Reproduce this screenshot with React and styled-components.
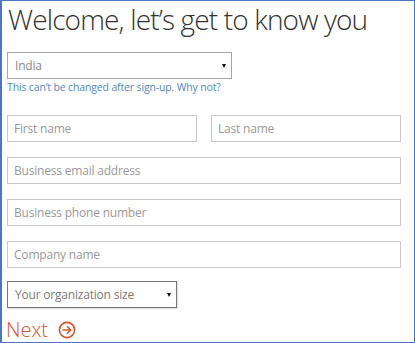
import styled, { createGlobalStyle } from "styled-components";

const GlobalStyle = createGlobalStyle`
  html, body {
    margin: 0;
    padding: 0;
    background: #ffffff;
  }
  body {
    font-family: "Open Sans", "Noto Sans", sans-serif;
  }
  * {
    box-sizing: border-box;
  }
`;

const Frame = styled.main`
  width: 415px;
  height: 343px;
  border: 1px solid #4a76c2;
  border-left-width: 2px;
  padding: 0 13px 0 5px;
  display: flex;
  flex-direction: column;
  overflow: hidden;
  background: #ffffff;
`;

const Title = styled.h1`
  margin: 0 0 0 1px;
  font-size: 28px;
  line-height: 36px;
  font-weight: 300;
  letter-spacing: -0.85px;
  color: #333333;
  white-space: nowrap;
`;

const Field = styled.div`
  margin-top: ${(p) => p.$top || 15}px;
  display: flex;
  gap: 14px;
`;

const SelectWrap = styled.div`
  position: relative;
  width: ${(p) => p.$width}px;
  height: 27px;
  &::after {
    content: "";
    position: absolute;
    right: 6px;
    top: 12px;
    border-left: 2.5px solid transparent;
    border-right: 2.5px solid transparent;
    border-top: 4px solid #111111;
    pointer-events: none;
  }
`;

const Select = styled.select`
  appearance: none;
  width: 100%;
  height: 100%;
  margin: 0;
  border: 1px solid ${(p) => (p.$dark ? "#777777" : "#a6a6a6")};
  box-shadow: ${(p) => (p.$dark ? "1px 1px 1px rgba(0,0,0,0.12)" : "none")};
  border-radius: 0;
  background: #ffffff;
  padding: 0 0 0 7px;
  font-family: inherit;
  font-size: 12px;
  letter-spacing: -0.2px;
  color: ${(p) => (p.$dark ? "#7a7a7a" : "#8a8a8a")};
  outline: none;
`;

const Input = styled.input`
  flex: 1;
  min-width: 0;
  height: 27px;
  margin: 0;
  border: 1px solid #c8c8c8;
  border-radius: 0;
  padding: 0 6px;
  font-family: inherit;
  font-size: 12px;
  letter-spacing: -0.2px;
  color: #333333;
  outline: none;
  &::placeholder {
    color: #999999;
  }
`;

const Hint = styled.a`
  margin-top: 1px;
  font-size: 10.5px;
  line-height: 14px;
  letter-spacing: -0.15px;
  color: #5187c4;
  text-decoration: none;
`;

const NextButton = styled.button`
  margin-top: 9px;
  margin-left: -1px;
  align-self: flex-start;
  display: flex;
  align-items: center;
  gap: 10px;
  border: 0;
  background: none;
  padding: 0;
  font-family: inherit;
  font-size: 20px;
  line-height: 26px;
  font-weight: 300;
  color: #d9532a;
  cursor: pointer;
`;

const ArrowCircle = () => (
  <svg width="18" height="18" viewBox="0 0 18 18" fill="none">
    <circle cx="9" cy="9" r="7.6" stroke="#d9532a" strokeWidth="1.6" />
    <path
      d="M5 9h7.5M9.5 5.8 12.7 9l-3.2 3.2"
      stroke="#d9532a"
      strokeWidth="1.6"
      strokeLinecap="round"
      strokeLinejoin="round"
    />
  </svg>
);

const App = () => {
  return (
    <>
      <GlobalStyle />
      <Frame>
        <Title>Welcome, let’s get to know you</Title>
        <Field $top={15}>
          <SelectWrap $width={225}>
            <Select defaultValue="India">
              <option>India</option>
            </Select>
          </SelectWrap>
        </Field>
        <Hint href="#">This can’t be changed after sign-up. Why not?</Hint>
        <Field $top={21}>
          <Input placeholder="First name" />
          <Input placeholder="Last name" />
        </Field>
        <Field>
          <Input placeholder="Business email address" />
        </Field>
        <Field>
          <Input placeholder="Business phone number" />
        </Field>
        <Field>
          <Input placeholder="Company name" />
        </Field>
        <Field $top={13}>
          <SelectWrap $width={170}>
            <Select $dark defaultValue="">
              <option value="">Your organization size</option>
            </Select>
          </SelectWrap>
        </Field>
        <NextButton type="button">
          Next
          <ArrowCircle />
        </NextButton>
      </Frame>
    </>
  );
};

export default App;
